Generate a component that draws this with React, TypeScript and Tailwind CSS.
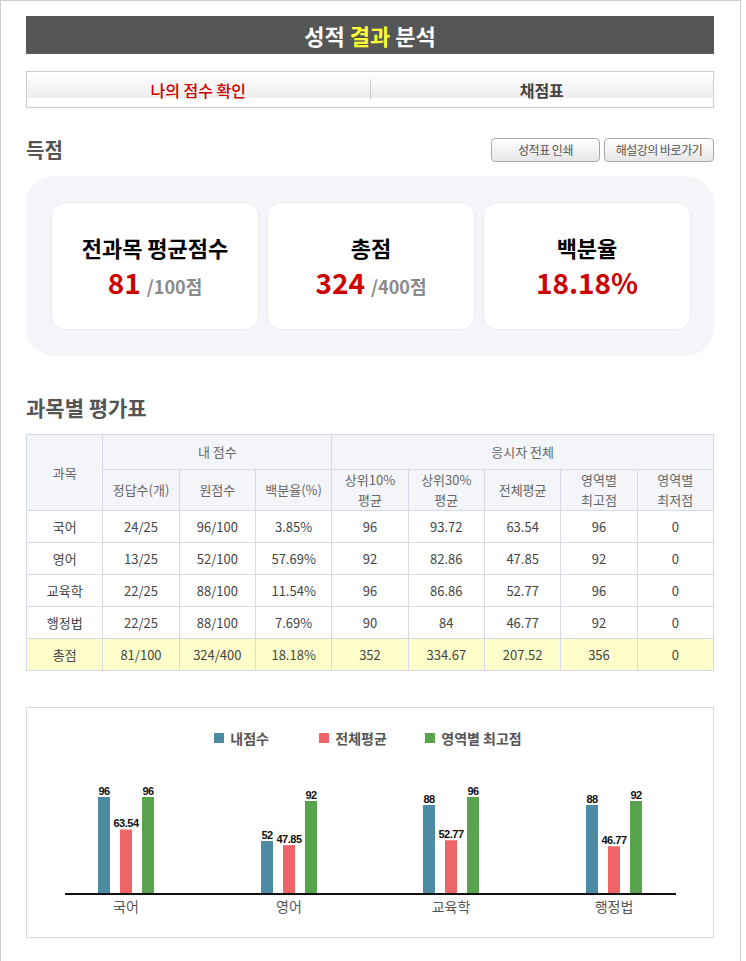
const rows = [
  ["국어", "24/25", "96/100", "3.85%", "96", "93.72", "63.54", "96", "0"],
  ["영어", "13/25", "52/100", "57.69%", "92", "82.86", "47.85", "92", "0"],
  ["교육학", "22/25", "88/100", "11.54%", "96", "86.86", "52.77", "96", "0"],
  ["행정법", "22/25", "88/100", "7.69%", "90", "84", "46.77", "92", "0"],
];
const total = ["총점", "81/100", "324/400", "18.18%", "352", "334.67", "207.52", "356", "0"];

const groups = [
  { name: "국어", mine: 96, avg: 63.54, max: 96, x: 71 },
  { name: "영어", mine: 52, avg: 47.85, max: 92, x: 234 },
  { name: "교육학", mine: 88, avg: 52.77, max: 96, x: 396 },
  { name: "행정법", mine: 88, avg: 46.77, max: 92, x: 559 },
];

const BLUE = "#4d8ba5";
const RED = "#ef6567";
const GREEN = "#58a44c";

function ScoreCard({ title, value, unit }: { title: string; value: string; unit?: string }) {
  return (
    <div className="flex h-[128px] w-[208px] flex-col items-center rounded-[14px] border border-[#ececf2] bg-white pt-[29px]">
      <div className="text-[22px] leading-[30px] font-bold text-black">{title}</div>
      <div className="mt-[2px] flex items-baseline leading-[36px]">
        <span className="text-[28px] font-bold text-[#cc0000]">{value}</span>
        {unit && <span className="ml-[6px] text-[18px] font-bold text-[#8a8a8a]">{unit}</span>}
      </div>
    </div>
  );
}

function Bar({ x, v, color }: { x: number; v: number; color: string }) {
  const top = 132 - v;
  return (
    <g>
      <rect x={x} y={top} width={12} height={v} fill={color} />
      <text
        x={x + 6}
        y={top - 2}
        textAnchor="middle"
        fontSize={11}
        fontWeight="bold"
        letterSpacing={-0.5}
        fontFamily="'Liberation Sans', Arial, sans-serif"
        fill="#111"
      >
        {v}
      </text>
    </g>
  );
}

function Chart() {
  return (
    <div className="mt-[36px] h-[231px] border border-[#d5d9ea] pt-[24px]">
      <div className="flex h-[12px] items-center justify-center pr-[4px] text-[14px] font-bold text-[#555]">
        <div className="flex w-[105px] items-center">
          <span className="mr-[6px] h-[10px] w-[10px]" style={{ background: BLUE }} />
          내점수
        </div>
        <div className="flex w-[106px] items-center">
          <span className="mr-[6px] h-[10px] w-[10px]" style={{ background: RED }} />
          전체평균
        </div>
        <div className="flex items-center">
          <span className="mr-[6px] h-[10px] w-[10px]" style={{ background: GREEN }} />
          영역별 최고점
        </div>
      </div>
      <svg width={686} height={170} className="mt-[17px] block">
        {groups.map((g) => (
          <g key={g.name}>
            <Bar x={g.x} v={g.mine} color={BLUE} />
            <Bar x={g.x + 22} v={g.avg} color={RED} />
            <Bar x={g.x + 44} v={g.max} color={GREEN} />
            <text
              x={g.x + 28}
              y={151}
              textAnchor="middle"
              fontSize={14}
              fill="#555"
              fontFamily="'Noto Sans CJK KR', sans-serif"
            >
              {g.name}
            </text>
          </g>
        ))}
        <line x1={38} y1={133} x2={649} y2={133} stroke="#111" strokeWidth={2} />
      </svg>
    </div>
  );
}

export default function App() {
  const th = "border border-[#d5d9ea] bg-[#f4f5f9] font-normal text-[#666]";
  const td = "h-[32px] border border-[#d5d9ea] text-center text-[#444]";
  return (
    <div className="min-h-[961px] bg-white font-['Noto_Sans_CJK_KR','Noto_Sans',sans-serif]">
      <div className="w-[741px] border-x border-t border-[#ccc] pt-[15px] pb-[40px] pl-[25px]">
        <div className="w-[688px]">
          <div className="flex h-[38px] items-center justify-center bg-[#555756] text-[22px] font-bold text-white">
            성적&nbsp;<span className="text-[#ffff33]">결과</span>&nbsp;분석
          </div>

          <div className="mt-[17px] flex h-[37px] items-center border border-[#ccc] bg-[linear-gradient(#fff,#ededed_26px,#fff_26px)] text-[16px] font-medium">
            <div className="flex flex-1 justify-center text-[#cc0000]">나의 점수 확인</div>
            <div className="h-[21px] w-px bg-[#ccc]" />
            <div className="flex flex-1 justify-center font-bold text-[#444]">채점표</div>
          </div>

          <div className="mt-[30px] flex h-[24px] items-center justify-between">
            <h2 className="text-[20px] leading-[24px] font-bold text-[#555]">득점</h2>
            <div className="flex gap-[4px]">
              <button className="h-[24px] w-[109px] rounded-[4px] border border-[#aaa] bg-[linear-gradient(#fff,#e6e6e6)] text-[12px] tracking-[-0.5px] whitespace-pre text-[#555]">
                성적표 인쇄
              </button>
              <button className="h-[24px] w-[110px] rounded-[4px] border border-[#aaa] bg-[linear-gradient(#fff,#e6e6e6)] text-[12px] tracking-[-0.5px] whitespace-pre text-[#555]">
                해설강의 바로가기
              </button>
            </div>
          </div>

          <div className="mt-[14px] flex h-[180px] gap-[8px] rounded-[28px] bg-[#f4f5f9] pt-[26px] pl-[25px]">
            <ScoreCard title="전과목 평균점수" value="81" unit="/100점" />
            <ScoreCard title="총점" value="324" unit="/400점" />
            <ScoreCard title="백분율" value="18.18%" />
          </div>

          <h2 className="mt-[39px] text-[21px] leading-[24px] font-bold text-[#555]">과목별 평가표</h2>

          <table className="mt-[15px] w-full table-fixed border-collapse text-[13px]">
            <thead>
              <tr className="h-[35px]">
                <th rowSpan={2} className={th}>과목</th>
                <th colSpan={3} className={th}>내 점수</th>
                <th colSpan={5} className={th}>응시자 전체</th>
              </tr>
              <tr className="h-[41px] leading-[20px]">
                <th className={th}>정답수(개)</th>
                <th className={th}>원점수</th>
                <th className={th}>백분율(%)</th>
                <th className={th}>상위10%<br />평균</th>
                <th className={th}>상위30%<br />평균</th>
                <th className={th}>전체평균</th>
                <th className={th}>영역별<br />최고점</th>
                <th className={th}>영역별<br />최저점</th>
              </tr>
            </thead>
            <tbody>
              {rows.map((r) => (
                <tr key={r[0]}>
                  {r.map((c, i) => (
                    <td key={i} className={td}>{c}</td>
                  ))}
                </tr>
              ))}
              <tr className="bg-[#ffffcc]">
                {total.map((c, i) => (
                  <td key={i} className={td}>{c}</td>
                ))}
              </tr>
            </tbody>
          </table>

          <Chart />
        </div>
      </div>
    </div>
  );
}
